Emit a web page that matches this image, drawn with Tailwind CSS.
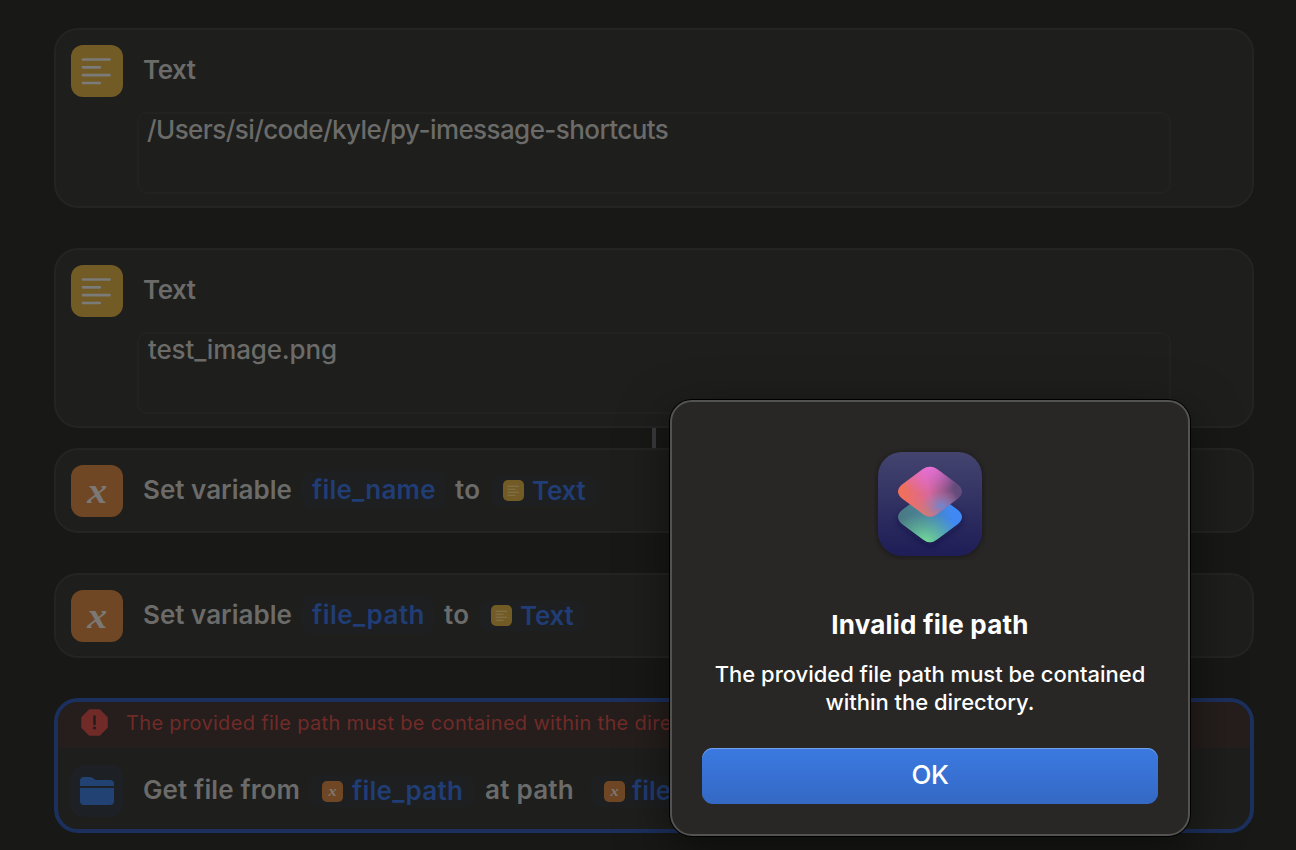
<!DOCTYPE html>
<html lang="en">
<head>
<meta charset="utf-8">
<title>Shortcuts</title>
<script src="https://cdn.jsdelivr.net/npm/@tailwindcss/browser@4"></script>
</head>
<body class="relative h-[850px] w-[1296px] overflow-hidden bg-[#181816] font-['Inter',sans-serif] text-[#6b6b69]">
<svg class="hidden">
  <symbol id="lines" viewBox="0 0 52 52"><rect width="52" height="52" rx="12" fill="#735b26"/><path d="M12 14.500H38.500M12 22.300H28.800M12 30.200H38.500M12 38H28.800" stroke="#7b7b79" stroke-width="2.700" stroke-linecap="round"/></symbol>
  <symbol id="lines-small" viewBox="0 0 21 21"><rect width="21" height="21" rx="5" fill="#735b26"/><path d="M5 6.200H15.500M5 9.200H12M5 12.200H15.500M5 15.200H12" stroke="#83764f" stroke-width="1.100" stroke-linecap="round"/></symbol>
  <symbol id="var" viewBox="0 0 52 52"><rect width="52" height="52" rx="12" fill="#6f4724"/><text x="26.300" y="37" text-anchor="middle" font-family="Liberation Serif, serif" font-size="40" font-style="italic" font-weight="700" fill="#7b7876" transform="translate(0 4) scale(1 .92)">x</text></symbol>
</svg>
<main class="flex flex-col pt-[28px] pl-[54px]">
  <section class="h-[180px] w-[1200px] rounded-[24px] border-2 border-[#242423] bg-[#1e1e1c]">
    <div class="flex h-[82px] items-start pt-[15px] pl-[15px]">
      <svg class="size-[52px]"><use href="#lines"/></svg>
      <h2 class="ml-5 mt-[9px] text-[26px] leading-8 font-semibold tracking-[-0.5px]">Text</h2>
    </div>
    <div class="ml-[81px] h-[82px] w-[1034px] rounded-[10px] border-2 border-[#222221] pl-2 text-[26px] leading-8 font-[450] whitespace-nowrap"><span class="tracking-[-0.58px]">/Users/si/code/kyle/py-imessage-shortcuts</span></div>
  </section>
  <section class="mt-10 h-[180px] w-[1200px] rounded-[24px] border-2 border-[#242423] bg-[#1e1e1c]">
    <div class="flex h-[82px] items-start pt-[15px] pl-[15px]">
      <svg class="size-[52px]"><use href="#lines"/></svg>
      <h2 class="ml-5 mt-[9px] text-[26px] leading-8 font-semibold tracking-[-0.5px]">Text</h2>
    </div>
    <div class="ml-[81px] h-[82px] w-[1034px] rounded-[10px] border-2 border-[#222221] pl-[9px] text-[26px] leading-8 font-[450] whitespace-nowrap"><span class="tracking-[-0.14px]">test_image.png</span></div>
  </section>
  <div class="ml-[598px] h-5 w-1 bg-[#3a3a3d]"></div>
  <section class="flex h-[85px] w-[1200px] items-center rounded-[24px] border-2 border-[#242423] bg-[#1e1e1c] pl-[15px] text-[26px] leading-8 font-semibold whitespace-nowrap">
    <svg class="size-[52px]"><use href="#var"/></svg>
    <span class="-mt-0.5 ml-5 w-[159px] tracking-[0.02px]">Set variable</span>
    <span class="-mt-0.5 flex h-[38px] w-[144px] items-center rounded-[10px] bg-[#1d1f21] pl-[10px] tracking-[0.2px] text-[#213d75]">file_name</span>
    <span class="-mt-0.5 ml-[9px] w-[36px] tracking-[0.3px]">to</span>
    <span class="flex h-[30px] w-[106px] items-center rounded-lg bg-[#1d1f21] pl-3 tracking-[-0.2px] text-[#213d75]"><svg class="mr-2 size-[21px] shrink-0"><use href="#lines-small"/></svg>Text</span>
  </section>
  <section class="mt-10 flex h-[85px] w-[1200px] items-center rounded-[24px] border-2 border-[#242423] bg-[#1e1e1c] pl-[15px] text-[26px] leading-8 font-semibold whitespace-nowrap">
    <svg class="size-[52px]"><use href="#var"/></svg>
    <span class="-mt-0.5 ml-5 w-[159px] tracking-[0.02px]">Set variable</span>
    <span class="-mt-0.5 flex h-[38px] w-[132px] items-center rounded-[10px] bg-[#1d1f21] pl-[10px] tracking-[0.45px] text-[#213d75]">file_path</span>
    <span class="-mt-0.5 ml-[10px] w-[35px] tracking-[0.3px]">to</span>
    <span class="flex h-[30px] w-[106px] items-center rounded-lg bg-[#1d1f21] pl-3 tracking-[-0.2px] text-[#213d75]"><svg class="mr-2 size-[21px] shrink-0"><use href="#lines-small"/></svg>Text</span>
  </section>
  <section class="mt-10 h-[135px] w-[1200px] overflow-hidden rounded-[24px] border-4 border-[#1c305e] bg-[#1e1e1c] whitespace-nowrap">
    <div class="flex h-[46px] items-start bg-[#251e1c] pt-[7px] pl-[22px] text-[#702b28]">
      <svg class="ml-px size-[27px]" viewBox="0 0 27 27"><path d="M8.500 1h10L26 8.500v10L18.500 26h-10L1 18.500v-10z" fill="#702b28" stroke="#702b28" stroke-width="1.500" stroke-linejoin="round"/><path d="M13.500 7.500v7.500" stroke="#251e1c" stroke-width="2.600" stroke-linecap="round"/><circle cx="13.500" cy="19" r="1.600" fill="#251e1c"/></svg>
      <span class="ml-[18px] text-[20px] leading-7 tracking-[0.33px]">The provided file path must be contained within the directory.</span>
    </div>
    <div class="flex h-[81px] items-center pl-[13px] pt-[5px] text-[26px] leading-8 font-semibold">
      <svg class="size-[52px]" viewBox="0 0 52 52"><rect width="52" height="52" rx="12" fill="#1d2024"/><path d="M9 21v-5q0-4 4-4h6q2 0 3.500 1.500t3.500 1.500h13q4 0 4 4v2zM9 23h34v13q0 4-4 4H13q-4 0-4-4z" fill="#234274"/></svg>
      <span class="-mt-0.5 ml-5 w-[166px] tracking-[0.12px]">Get file from</span>
      <span class="flex h-[32px] w-[165px] items-center rounded-lg bg-[#1d1f21] pl-[13px] tracking-[0.25px] text-[#213d75]"><svg class="mr-[9px] size-[21px] shrink-0"><use href="#var"/></svg>file_path</span>
      <span class="-mt-0.5 ml-[11px] w-[106px] tracking-[0.25px]">at path</span>
      <span class="flex h-[32px] w-[165px] items-center rounded-lg bg-[#1d1f21] pl-[13px] text-[#213d75]"><svg class="mr-[7px] size-[21px] shrink-0"><use href="#var"/></svg>file_name</span>
    </div>
  </section>
</main>
<div role="dialog" class="absolute top-[400px] left-[670px] flex h-[436px] w-[520px] flex-col items-center rounded-[22px] border-2 border-[#535351] bg-[#282725] text-white shadow-[0_0_0_1px_#000,0_16px_50px_rgba(0,0,0,0.5)]">
  <svg class="mt-[46px] size-[112px]" viewBox="0 0 112 112">
    <defs>
      <linearGradient id="bg" x2="0" y2="1"><stop stop-color="#44446f"/><stop offset="1" stop-color="#1e1d56"/></linearGradient>
      <linearGradient id="lo" x1="0" y1=".6" x2="1" y2=".4"><stop stop-color="#4a7880"/><stop offset=".4" stop-color="#4a8298"/><stop offset=".85" stop-color="#4089f5"/></linearGradient>
      <linearGradient id="up" x1=".1" y1=".65" x2=".9" y2=".5"><stop stop-color="#f0705c"/><stop offset=".5" stop-color="#d8679c"/><stop offset="1" stop-color="#634b7b"/></linearGradient>
      <radialGradient id="pink" cx=".5" cy="0" r=".55"><stop stop-color="#e770d8"/><stop offset="1" stop-color="#e770d8" stop-opacity="0"/></radialGradient>
      <radialGradient id="green" cx=".42" cy="1" r=".6"><stop stop-color="#76dd9a"/><stop offset="1" stop-color="#65c8a0" stop-opacity="0"/></radialGradient>
      <radialGradient id="mix" cx=".68" cy=".78" r=".32"><stop stop-color="#6d86d0"/><stop offset="1" stop-color="#a77aa0" stop-opacity="0"/></radialGradient>
      <radialGradient id="warm" cx=".45" cy=".95" r=".35"><stop stop-color="#cf7b74"/><stop offset="1" stop-color="#cf7b74" stop-opacity="0"/></radialGradient>
      <filter id="sh" x="-30%" y="-30%" width="160%" height="160%"><feGaussianBlur stdDeviation="3"/></filter>
      <path id="tile" d="M49 46.500Q56 42 63 46.500L84 62Q92 69 84 76L63 91.500Q56 97 49 91.500L28 76Q20 69 28 62Z"/>
    </defs>
    <rect x="4" y="5" width="104" height="104" rx="24" fill="#000" opacity=".4" filter="url(#sh)"/>
    <rect x="4" y="4" width="104" height="104" rx="24" fill="url(#bg)"/>
    <use href="#tile" y="3" fill="#0d0d3c" opacity=".5" filter="url(#sh)"/>
    <use href="#tile" fill="url(#lo)"/>
    <use href="#tile" fill="url(#green)"/>
    <g transform="translate(0 -25.500)">
      <use href="#tile" fill="url(#up)"/>
      <use href="#tile" fill="url(#pink)"/>
      <use href="#tile" fill="url(#warm)"/>
      <use href="#tile" fill="url(#mix)"/>
    </g>
  </svg>
  <h1 class="mt-[49px] text-[26px] leading-8 font-bold tracking-[0.2px]">Invalid file path</h1>
  <p class="mt-[19px] text-center text-[22px] leading-7 font-[450] tracking-[-0.02px]">The provided file path must be contained<br>within the directory.</p>
  <button class="mt-[32px] h-[56px] w-[456px] rounded-[11px] bg-linear-to-b from-[#3b79e1] to-[#3469c4] pb-1 text-[26px] font-[450] tracking-[-0.5px] shadow-[inset_0_1px_0_#72a0ea]">OK</button>
</div>
</body>
</html>
